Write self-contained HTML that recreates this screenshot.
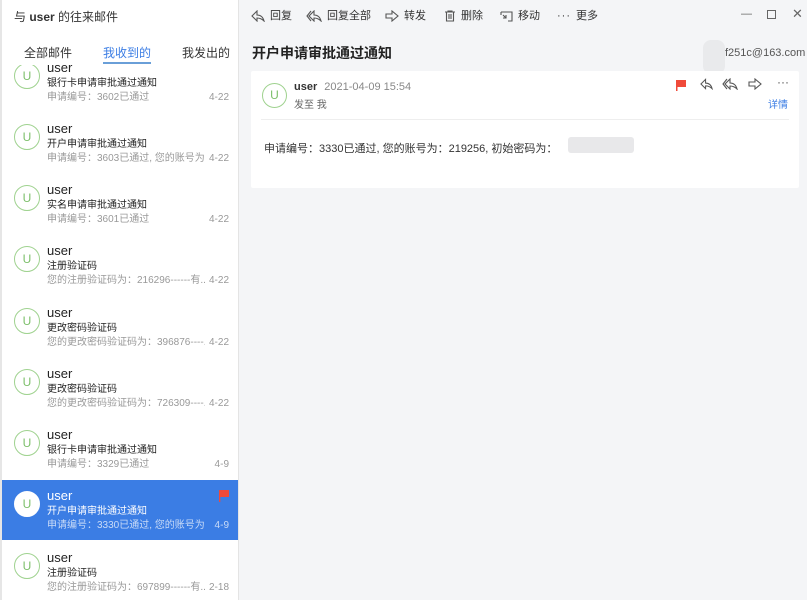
<!DOCTYPE html>
<html><head><meta charset="utf-8"><style>
*{margin:0;padding:0;box-sizing:border-box}
body{width:807px;height:600px;overflow:hidden;background:#f4f5f7;font-family:"Liberation Sans","Noto Sans CJK SC",sans-serif;position:relative;color:#333}
#left{position:absolute;left:0;top:0;width:239px;height:600px;background:#fff;border-left:2px solid #e6e6e6;border-right:1px solid #e4e4e4;overflow:hidden}
.title{position:absolute;left:12px;top:9px;font-size:12px;color:#333;line-height:16px}
.tabs{position:absolute;top:45px;left:0;width:237px;font-size:12px;line-height:16px}
.tabs span{position:absolute}
.tabs .on{color:#3b7de4}
.tabs .on:after{content:"";position:absolute;left:0;right:0;top:17px;height:2px;background:#6a9fd8}
#list{position:absolute;top:65px;left:0;width:237px;height:535px;overflow:hidden}
.item{position:absolute;left:0;width:237px;height:61px}
.av{position:absolute;left:12px;top:10px;width:26px;height:26px;border:1px solid #9fd28f;border-radius:50%;color:#7cbf6a;font-size:12px;text-align:center;line-height:24px;background:#fff}
.nm{position:absolute;left:45px;top:7px;font-size:13px;line-height:16px;color:#222}
.sb{position:absolute;left:45px;top:24px;font-size:10px;line-height:14px;color:#222;white-space:nowrap}
.pv{position:absolute;left:45px;top:38px;font-size:10px;line-height:14px;color:#999;white-space:nowrap;width:158px;overflow:hidden}
.dt{position:absolute;right:10px;top:38px;font-size:10px;line-height:14px;color:#999}
.sel{background:#3b7de4}
.sel .av{border-color:#fff;color:#7cbf6a}
.sel .nm,.sel .sb{color:#fff}
.sel .pv,.sel .dt{color:#c9dbf7}
.tb{position:absolute;top:9px;font-size:11px;line-height:14px;color:#333;display:flex;align-items:center}
.tb svg{margin-right:5px}
#card{position:absolute;left:251px;top:71px;width:548px;height:117px;background:#fff;border-radius:2px}
</style></head><body>
<div id="left">
<div class="title">与 <b>user</b> 的往来邮件</div>
<div class="tabs"><span style="left:22px">全部邮件</span><span class="on" style="left:101px">我收到的</span><span style="left:180px">我发出的</span></div>
<div id="list">
<div class="item" style="top:-12px"><div class="av">U</div><div class="nm">user</div><div class="sb">银行卡申请审批通过通知</div><div class="pv">申请编号：3602已通过</div><div class="dt">4-22</div></div>
<div class="item" style="top:49px"><div class="av">U</div><div class="nm">user</div><div class="sb">开户申请审批通过通知</div><div class="pv">申请编号：3603已通过, 您的账号为 ...</div><div class="dt">4-22</div></div>
<div class="item" style="top:110px"><div class="av">U</div><div class="nm">user</div><div class="sb">实名申请审批通过通知</div><div class="pv">申请编号：3601已通过</div><div class="dt">4-22</div></div>
<div class="item" style="top:171px"><div class="av">U</div><div class="nm">user</div><div class="sb">注册验证码</div><div class="pv">您的注册验证码为：216296------有...</div><div class="dt">4-22</div></div>
<div class="item" style="top:233px"><div class="av">U</div><div class="nm">user</div><div class="sb">更改密码验证码</div><div class="pv">您的更改密码验证码为：396876----...</div><div class="dt">4-22</div></div>
<div class="item" style="top:294px"><div class="av">U</div><div class="nm">user</div><div class="sb">更改密码验证码</div><div class="pv">您的更改密码验证码为：726309----...</div><div class="dt">4-22</div></div>
<div class="item" style="top:355px"><div class="av">U</div><div class="nm">user</div><div class="sb">银行卡申请审批通过通知</div><div class="pv">申请编号：3329已通过</div><div class="dt">4-9</div></div>
<div class="item sel" style="top:415px;height:60px"><div class="av" style="top:11px">U</div><div class="nm" style="top:8px">user</div><div class="sb" style="top:25px">开户申请审批通过通知</div><div class="pv" style="top:39px">申请编号：3330已通过, 您的账号为：...</div><div class="dt" style="top:39px">4-9</div>
<svg style="position:absolute;right:10px;top:9px" width="11" height="13"><rect x="1" y="1" width="10" height="7" fill="#f04a3a"/><rect x="1" y="1" width="1.3" height="12" fill="#f04a3a"/></svg></div>
<div class="item" style="top:478px"><div class="av">U</div><div class="nm">user</div><div class="sb">注册验证码</div><div class="pv">您的注册验证码为：697899------有...</div><div class="dt">2-18</div></div>
</div>
</div>

<div class="tb" style="left:251px"><svg width="14" height="12" viewBox="0 0 14 12"><path d="M6 1L1 6l5 5V8c3 0 5 1 7 3-1-4-3-6-7-6z" fill="none" stroke="#555" stroke-width="1.1"/></svg>回复</div>
<div class="tb" style="left:306px"><svg width="16" height="12" viewBox="0 0 16 12"><path d="M5 1L1 6l4 5M8 1L3 6l5 5V8c3 0 5 1 7 3-1-4-3-6-7-6z" fill="none" stroke="#555" stroke-width="1.1"/></svg>回复全部</div>
<div class="tb" style="left:385px"><svg width="14" height="12" viewBox="0 0 14 12"><path d="M1 4h6V1l6 5-6 5V8H1z" fill="none" stroke="#555" stroke-width="1.1"/></svg>转发</div>
<div class="tb" style="left:444px"><svg width="12" height="12" viewBox="0 0 12 12"><path d="M1 2h10M4 2V1h4v1M2.5 2v9h7V2M5 4v5M7 4v5" fill="none" stroke="#555" stroke-width="1.1"/></svg>删除</div>
<div class="tb" style="left:500px"><svg width="13" height="12" viewBox="0 0 13 12"><path d="M1 2h11v9H8M1 2v3M3 5l3 3M6 5v3H3" fill="none" stroke="#555" stroke-width="1.1"/></svg>移动</div>
<div class="tb" style="left:557px"><span style="letter-spacing:1px;margin-right:5px">···</span>更多</div>
<div style="position:absolute;left:741px;top:8px;font-size:11px;color:#666">—</div>
<div style="position:absolute;left:767px;top:10px;width:9px;height:9px;border:1px solid #666"></div>
<div style="position:absolute;left:792px;top:6px;font-size:13px;color:#666">✕</div>

<div style="position:absolute;left:252px;top:44px;font-size:14px;line-height:18px;font-weight:bold;color:#222">开户申请审批通过通知</div>
<div style="position:absolute;left:703px;top:40px;width:22px;height:34px;background:#e9eaec;border-radius:8px"></div>
<div style="position:absolute;left:725px;top:47px;font-size:11px;color:#555">f251c@163.com</div>

<div id="card">
<div style="position:absolute;left:11px;top:12px;width:25px;height:25px;border:1px solid #9fd28f;border-radius:50%;color:#7cbf6a;font-size:12px;text-align:center;line-height:23px">U</div>
<div style="position:absolute;left:43px;top:10px;font-size:11px;font-weight:bold;color:#333">user <span style="font-weight:normal;color:#888;margin-left:4px">2021-04-09 15:54</span></div>
<div style="position:absolute;left:43px;top:25px;font-size:10px;color:#666">发至 我</div>
<svg style="position:absolute;left:424px;top:8px" width="12" height="12"><rect x="1" y="1" width="10" height="7" fill="#f04a3a"/><rect x="1" y="1" width="1.5" height="11" fill="#f04a3a"/></svg>
<svg style="position:absolute;left:449px;top:7px" width="13" height="12" viewBox="0 0 14 12"><path d="M6 1L1 6l5 5V8c3 0 5 1 7 3-1-4-3-6-7-6z" fill="none" stroke="#555" stroke-width="1.1"/></svg>
<svg style="position:absolute;left:471px;top:7px" width="16" height="12" viewBox="0 0 16 12"><path d="M5 1L1 6l4 5M8 1L3 6l5 5V8c3 0 5 1 7 3-1-4-3-6-7-6z" fill="none" stroke="#555" stroke-width="1.1"/></svg>
<svg style="position:absolute;left:497px;top:7px" width="14" height="12" viewBox="0 0 14 12"><path d="M1 4h6V1l6 5-6 5V8H1z" fill="none" stroke="#555" stroke-width="1.1"/></svg>
<div style="position:absolute;left:526px;top:4px;font-size:12px;color:#555">···</div>
<div style="position:absolute;left:517px;top:25px;font-size:10px;color:#3b7de4">详情</div>
<div style="position:absolute;left:10px;right:10px;top:48px;border-top:1px solid #eee"></div>
<div style="position:absolute;left:13px;top:69px;font-size:11px;color:#333">申请编号：3330已通过, 您的账号为：219256, 初始密码为：</div>
<div style="position:absolute;left:317px;top:66px;width:66px;height:16px;background:#e8e8ea;border-radius:3px"></div>
</div>
</body></html>
